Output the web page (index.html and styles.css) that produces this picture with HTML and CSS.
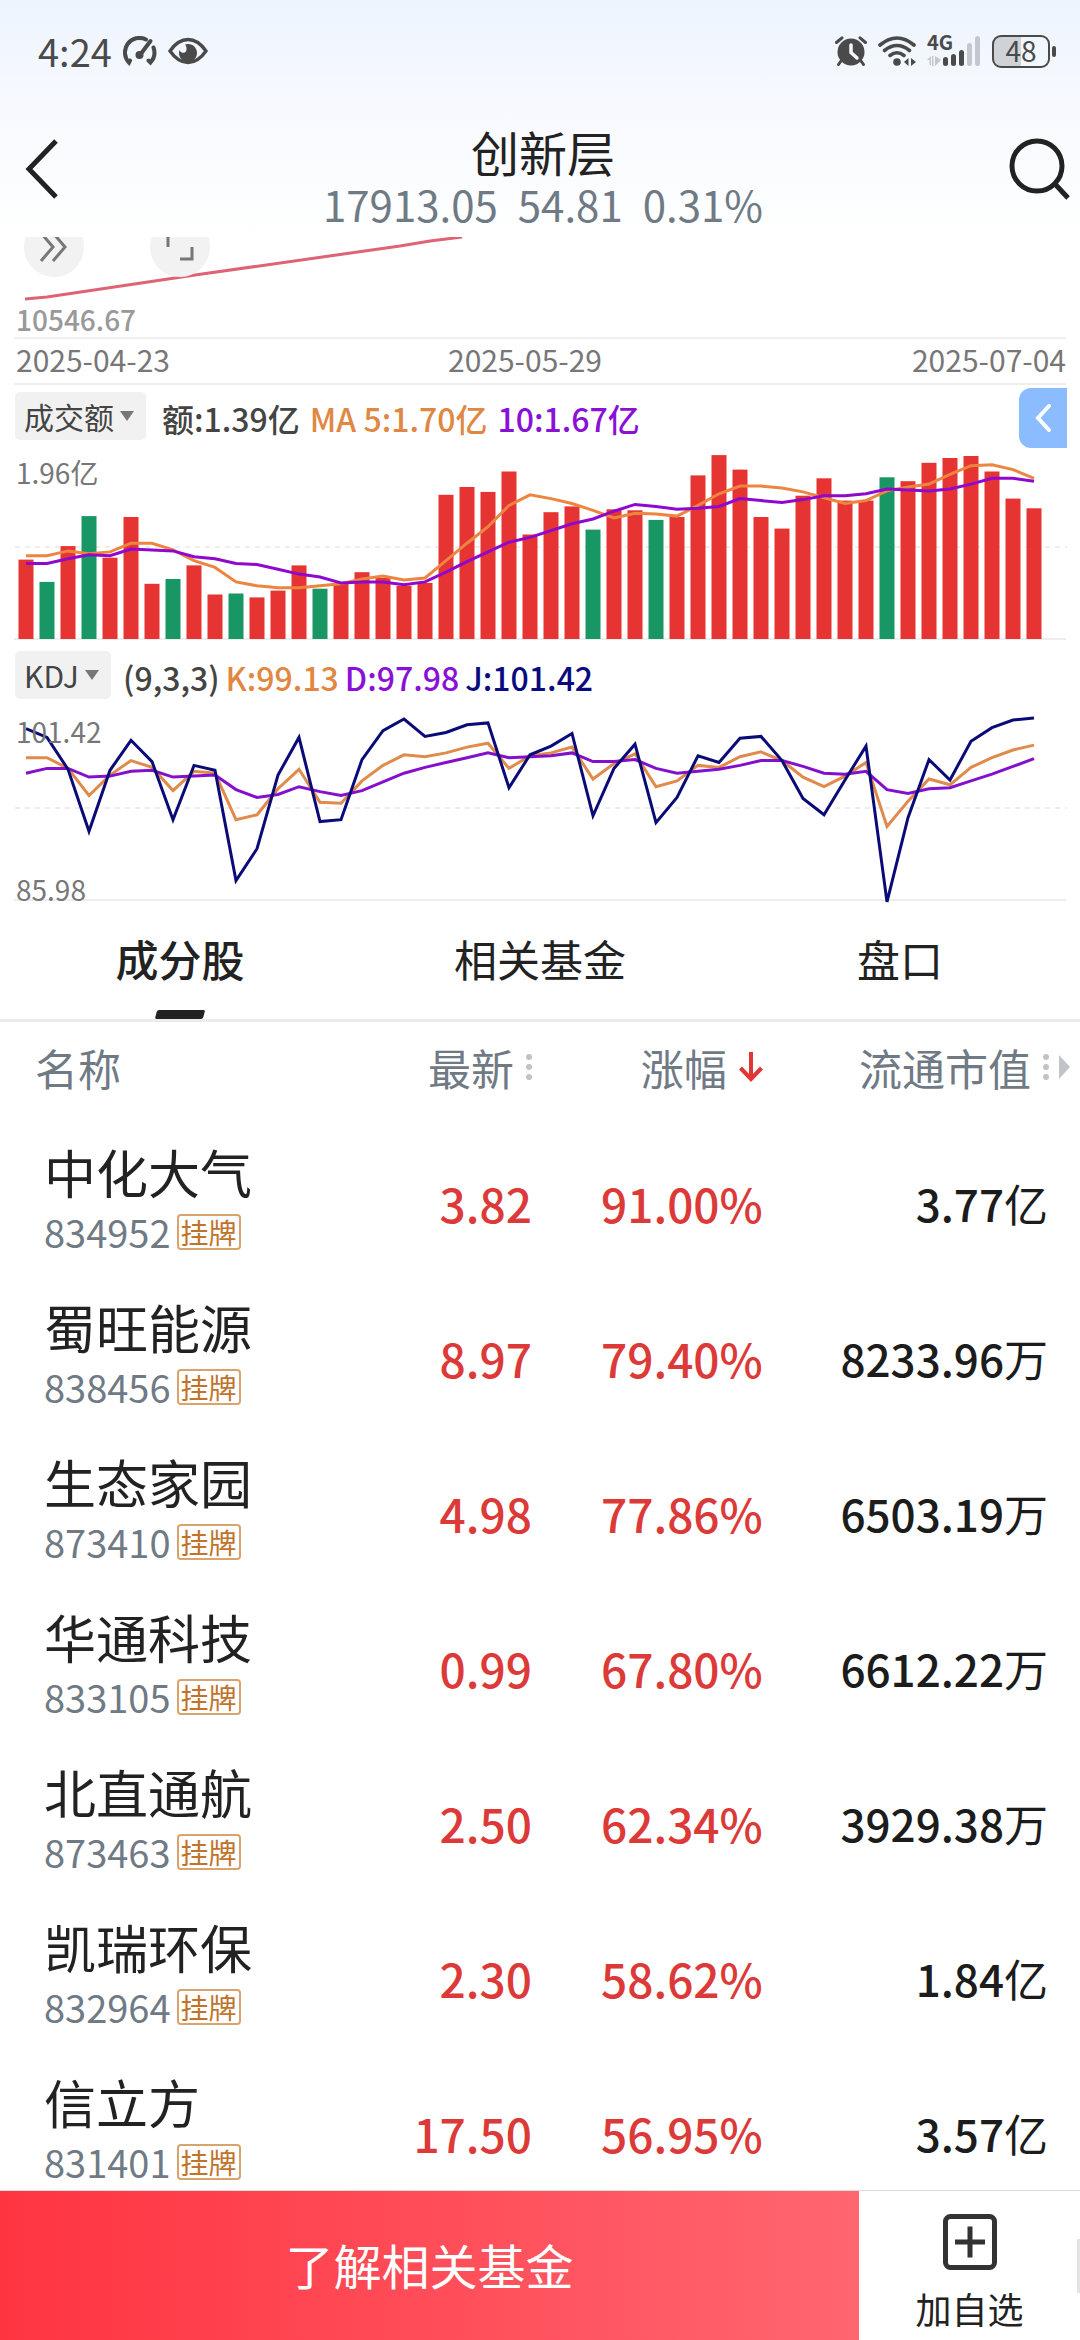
FILE: index.html
```html
<!DOCTYPE html>
<html lang="zh-CN">

<head>
    <meta charset="UTF-8">
    <meta name="viewport" content="width=device-width, initial-scale=1">
    <title>创新层</title>
    <link rel="stylesheet" href="styles.css">
</head>

<body>
    <!-- 顶部 -->
    <header class="topo">
        <div class="status">
            <div class="status-left">
                <span class="time">4:24</span>
                <svg width="34" height="30" viewBox="0 0 34 30" fill="none" stroke="#4a4a4a" stroke-width="4" stroke-linecap="round">
                    <path d="M23 3.500A14.500 14.500 0 0 0 6 26.500l1-2" />
                    <path d="M30.500 11.500a15 15 0 0 1-3 15l-2-2" />
                    <path d="M27.500 5L17 19" />
                    <circle cx="16.500" cy="19" r="2" fill="#4a4a4a" />
                </svg>
                <svg width="40" height="28" viewBox="0 0 40 28">
                    <path d="M2 14Q10 2.500 20 2.500T38 14Q30 25.500 20 25.500T2 14z" fill="none" stroke="#4a4a4a" stroke-width="3.400" />
                    <path d="M17 7.500a9 9 0 1 1-5.500 5.500 3.800 3.800 0 0 0 6.500 1.500q1.500-4-1-7z" fill="#4a4a4a" />
                </svg>
            </div>
            <div class="status-right">
                <svg width="32" height="30" viewBox="0 0 32 30">
                    <circle cx="16" cy="16" r="13.500" fill="#4a4a4a" />
                    <path d="M1.500 6.500L7 1.800M30.500 6.500L25 1.800M6 25l-2.500 3.500M26 25l2.500 3.500" stroke="#4a4a4a" stroke-width="3" stroke-linecap="round" />
                    <path d="M16 9v7.500l6 5.500" fill="none" stroke="#f3f7fd" stroke-width="3.500" stroke-linecap="round" />
                </svg>
                <svg width="38" height="30" viewBox="0 0 38 30" fill="none" stroke="#4a4a4a" stroke-width="3.600" stroke-linecap="round">
                    <path d="M2 9q17-14 34 0M6.500 14.500q12.500-10 25 0M12 19.500q7-5.500 14 0" />
                    <circle cx="19" cy="26" r="3.800" fill="#4a4a4a" stroke="none" />
                    <path d="M30.500 22v8l-4.500-4zM33 22v8l5-4z" fill="#4a4a4a" stroke="none" />
                </svg>
                <div class="signal">
                    <span class="rede">4G</span>
                    <svg width="54" height="30" viewBox="0 0 54 30" fill="#4a4a4a">
                        <path d="M0 24l4-4v9H2.500v-5zM8 20v10l6-6zM5 20h1.500v10H5z" fill="#c4c7cb" />
                        <rect x="16" y="21" width="5" height="9" rx="2.500" />
                        <rect x="24" y="18" width="5" height="12" rx="2.500" />
                        <rect x="32" y="14" width="5" height="16" rx="2.500" />
                        <rect x="40" y="7" width="5" height="23" rx="2.500" fill="#c4c7cb" />
                        <rect x="48" y="0" width="5" height="30" rx="2.500" fill="#c4c7cb" />
                    </svg>
                </div>
                <div class="battery">48</div>
            </div>
        </div>
        <div class="navbar">
            <button class="icon-btn" aria-label="返回">
                <svg width="36" height="64" viewBox="0 0 36 64" fill="none" stroke="#222" stroke-width="5">
                    <path d="M32 4L5 32l27 28" />
                </svg>
            </button>
            <div class="titulo">
                <h1>创新层</h1>
                <p class="cotacao"><span>17913.05</span><span>54.81</span><span>0.31%</span></p>
            </div>
            <button class="icon-btn" aria-label="搜索">
                <svg width="62" height="64" viewBox="0 0 62 64" fill="none" stroke="#222" stroke-width="5">
                    <circle cx="29" cy="29" r="25" />
                    <path d="M47 47l13 14" />
                </svg>
            </button>
        </div>
    </header>

    <!-- 走势图 -->
    <section class="preco">
        <svg class="grafico" viewBox="0 0 1080 100" fill="none">
            <path d="M25 62L47 60 195 38 400 9 430 4 462 0" stroke="#de6374" stroke-width="3" />
        </svg>
        <button class="bolha bolha-avancar" aria-label="展开">
            <svg width="30" height="32" viewBox="0 0 30 32" fill="none" stroke="#777" stroke-width="3">
                <path d="M2 2l12 14L2 30M14 2l12 14-12 14" />
            </svg>
        </button>
        <button class="bolha bolha-tela" aria-label="全屏">
            <svg width="30" height="30" viewBox="0 0 30 30" fill="none" stroke="#777" stroke-width="3">
                <path d="M3 15V3h12M15 27h12V15" />
            </svg>
        </button>
        <span class="preco-min">10546.67</span>
    </section>
    <div class="datas">
        <span>2025-04-23</span><span class="meio">2025-05-29</span><span>2025-07-04</span>
    </div>

    <!-- 成交额 -->
    <section class="painel">
        <div class="legenda">
            <div class="seletor">
                <select aria-label="指标一">
                    <option>成交额</option>
                    <option>成交量</option>
                </select>
            </div>
            <span>额:1.39亿</span>
            <span class="laranja">MA 5:1.70亿</span>
            <span class="roxo">10:1.67亿</span>
            <button class="recolher" aria-label="收起">
                <svg width="16" height="28" viewBox="0 0 16 28" fill="none" stroke="#fff" stroke-width="4" stroke-linecap="round">
                    <path d="M14 2L3 14l11 12" />
                </svg>
            </button>
        </div>
        <svg class="grafico" id="volume" viewBox="0 0 1080 199"></svg>
        <span class="valor-max">1.96亿</span>
    </section>

    <!-- KDJ -->
    <section class="painel">
        <div class="legenda legenda-kdj">
            <div class="seletor">
                <select aria-label="指标二">
                    <option>KDJ</option>
                    <option>RSI</option>
                </select>
            </div>
            <span>(9,3,3)</span>
            <span class="laranja">K:99.13</span>
            <span class="roxo">D:97.98</span>
            <span class="azul">J:101.42</span>
        </div>
        <svg class="grafico" id="kdj" viewBox="0 0 1080 203"></svg>
        <span class="valor-max">101.42</span>
        <span class="valor-min">85.98</span>
    </section>

    <!-- 标签 -->
    <nav class="abas">
        <button class="aba ativa">成分股</button>
        <button class="aba">相关基金</button>
        <button class="aba">盘口</button>
    </nav>

    <!-- 成分股列表 -->
    <main class="lista">
        <table>
            <thead>
                <tr>
                    <th>名称</th>
                    <th>
                        <button class="ordenar">最新
                            <svg width="6" height="28" viewBox="0 0 6 28" fill="#c0c4c9">
                                <circle cx="3" cy="4" r="3" /><circle cx="3" cy="14" r="3" /><circle cx="3" cy="24" r="3" />
                            </svg>
                        </button>
                    </th>
                    <th>
                        <button class="ordenar">涨幅
                            <svg width="24" height="30" viewBox="0 0 24 30" fill="none" stroke="#e03634" stroke-width="4">
                                <path d="M12 0v26M1.500 16L12 27l10.500-11" />
                            </svg>
                        </button>
                    </th>
                    <th>
                        <button class="ordenar">流通市值
                            <svg width="28" height="28" viewBox="0 0 28 28" fill="#c0c4c9">
                                <circle cx="3" cy="4" r="3" /><circle cx="3" cy="14" r="3" /><circle cx="3" cy="24" r="3" />
                                <path d="M16 2l11 12-11 12z" />
                            </svg>
                        </button>
                    </th>
                </tr>
            </thead>
            <tbody id="tabela-corpo"></tbody>
        </table>
    </main>

    <!-- 底部 -->
    <footer class="rodape">
        <button class="fundos">了解相关基金</button>
        <button class="favorito">
            <svg width="54" height="56" viewBox="0 0 54 56" fill="none" stroke="#333" stroke-width="5">
                <rect x="2.500" y="2.500" width="49" height="51" rx="5" />
                <path d="M12 28h30M27 12.500v31" />
            </svg>
            加自选
        </button>
    </footer>

    <script src="script.js"></script>
</body>

</html>
```

FILE: styles.css
```css
* {
    box-sizing: border-box;
}

body {
    margin: 0;
    height: 100vh;
    display: flex;
    flex-direction: column;
    overflow: hidden;
    background: #fff;
    color: #222;
    font-family: "Noto Sans CJK SC", "Noto Sans", sans-serif;
}

button {
    border: none;
    padding: 0;
    background: none;
    font: inherit;
    color: inherit;
    cursor: pointer;
}

svg {
    display: block;
    flex: none;
}

/* 顶部 */
.topo {
    background: linear-gradient(#edf4fe, #f5f8fe 35%, #fff);
    padding-bottom: 5px;
}

.status {
    display: flex;
    justify-content: space-between;
    align-items: center;
    height: 102px;
    padding: 0 24px 0 38px;
    color: #4a4a4a;
}

.status-left,
.status-right {
    display: flex;
    align-items: center;
    gap: 11px;
}

.time {
    font-size: 38px;
    line-height: 44px;
}

.signal {
    position: relative;
}

.rede {
    position: absolute;
    top: 0;
    left: 0;
    font-size: 20px;
    line-height: 12px;
    font-weight: bold;
}

.battery {
    position: relative;
    width: 58px;
    height: 33px;
    margin-right: 6px;
    border: 2px solid #4a4a4a;
    border-radius: 9px;
    background: linear-gradient(90deg, #cfd2d7 50%, transparent 50%);
    font-size: 28px;
    line-height: 26px;
    text-align: center;
}

.battery::after {
    content: "";
    position: absolute;
    right: -8px;
    top: 9px;
    width: 4px;
    height: 11px;
    border-radius: 2px;
    background: #4a4a4a;
}

.navbar {
    display: flex;
    justify-content: space-between;
    align-items: center;
    height: 130px;
    padding: 4px 10px 0 24px;
}

.icon-btn {
    width: 62px;
}

.titulo {
    padding-top: 13px;
    margin-right: 8px;
    text-align: center;
}

h1 {
    margin: 0;
    font-size: 48px;
    line-height: 56px;
    font-weight: normal;
}

.cotacao {
    display: flex;
    gap: 20px;
    margin: 0;
    font-size: 42px;
    line-height: 50px;
    color: #6f7a85;
}

/* 走势图 */
.grafico {
    width: 100%;
}

.preco {
    position: relative;
    overflow: hidden;
}

.bolha {
    position: absolute;
    top: -20px;
    width: 60px;
    height: 60px;
    border-radius: 50%;
    background: #f2f2f2;
    display: flex;
    justify-content: center;
    align-items: center;
}

.bolha-avancar {
    left: 24px;
}

.bolha-tela {
    left: 150px;
}

.preco-min {
    position: absolute;
    left: 16px;
    bottom: 2px;
    font-size: 28px;
    line-height: 32px;
    font-weight: 500;
    color: #999;
}

.datas {
    display: flex;
    justify-content: space-between;
    margin: 0 14px;
    padding: 0 0 4px 2px;
    border-top: 2px solid #eef0f0;
    border-bottom: 2px solid #eef0f0;
    font-size: 30px;
    line-height: 40px;
    color: #777;
}

.meio {
    margin-right: 32px;
}

/* 指标 */
.painel {
    position: relative;
}

.legenda {
    display: flex;
    align-items: center;
    gap: 10px;
    height: 54px;
    margin: 6px 13px 0 15px;
    font-size: 32px;
    line-height: 48px;
    font-weight: 500;
    color: #444;
}

.legenda-kdj {
    gap: 6px;
}

.seletor {
    position: relative;
    margin: 0 6px 4px 0;
}

.seletor select {
    appearance: none;
    display: block;
    height: 48px;
    padding: 0 32px 0 9px;
    border: none;
    border-radius: 5px;
    background: #f1f1f1;
    color: #444;
    font-family: inherit;
    font-size: 30px;
}

.seletor::after {
    content: "";
    position: absolute;
    right: 12px;
    top: 19px;
    border: 7px solid transparent;
    border-top: 10px solid #777;
    border-bottom: none;
    pointer-events: none;
}

.laranja {
    color: #e08743;
}

.roxo {
    color: #8a10d8;
}

.azul {
    color: #0b0b80;
}

.recolher {
    display: flex;
    justify-content: center;
    align-items: center;
    width: 48px;
    height: 60px;
    margin-left: auto;
    border-radius: 12px 0 0 12px;
    background: #8bbcff;
}

.valor-max,
.valor-min {
    position: absolute;
    left: 16px;
    font-size: 28px;
    line-height: 32px;
    color: #777;
}

.valor-max {
    top: 71px;
}

.valor-min {
    bottom: 2px;
}

/* 标签 */
.abas {
    display: flex;
    border-bottom: 3px solid #e9ebec;
}

.aba {
    position: relative;
    flex: 1;
    height: 112px;
    padding-bottom: 10px;
    font-size: 43px;
    line-height: 48px;
}

.ativa {
    font-weight: 500;
}

.ativa::after {
    content: "";
    position: absolute;
    left: 50%;
    bottom: 0;
    width: 48px;
    height: 9px;
    margin-left: -24px;
    border-radius: 2px;
    background: #222;
    transform: skewX(-15deg);
}

/* 列表 */
.lista {
    flex: 1;
    min-height: 0;
    overflow: hidden;
}

table {
    width: 100%;
    table-layout: fixed;
    border-collapse: collapse;
}

th,
td {
    padding: 0;
    text-align: right;
}

th {
    height: 107px;
    padding-bottom: 17px;
    font-size: 43px;
    line-height: 48px;
    font-weight: normal;
    color: #6f7a85;
}

th:nth-child(1) {
    width: 28%;
    padding-left: 35px;
    text-align: left;
}

th:nth-child(2) {
    width: 22%;
}

th:nth-child(3) {
    width: 21%;
}

th:nth-child(4) {
    padding-right: 9px;
}

.ordenar {
    display: inline-flex;
    align-items: center;
    gap: 12px;
    white-space: nowrap;
}

td {
    height: 155px;
    padding-bottom: 8px;
    font-size: 46px;
    line-height: 52px;
    font-weight: 500;
    color: #dc3a38;
}

td:nth-child(1) {
    padding: 0 0 16px 44px;
    text-align: left;
}

th:nth-child(2),
td:nth-child(2) {
    padding-right: 8px;
}

th:nth-child(3),
td:nth-child(3) {
    padding-right: 4px;
}

td:nth-child(4) {
    padding-right: 32px;
    font-size: 44px;
    color: #1c1c1c;
}

.unidade {
    font-weight: normal;
}

.nome {
    font-size: 52px;
    line-height: 66px;
    font-weight: normal;
    color: #222;
    white-space: nowrap;
}

.codigo {
    display: flex;
    align-items: center;
    gap: 6px;
    font-size: 38px;
    line-height: 54px;
    font-weight: normal;
    color: #6f7a85;
}

.selo {
    padding: 0 2px;
    border: 2px solid #d8a36c;
    border-radius: 4px;
    font-size: 28px;
    line-height: 32px;
    color: #bf732b;
}

/* 底部 */
.rodape {
    display: flex;
    height: 150px;
    border-top: 1px solid #ddd;
    background: #fff;
}

.fundos {
    flex: 859 1 0;
    padding-bottom: 4px;
    background: linear-gradient(90deg, #ff3441, #ff6670);
    color: #fff;
    font-size: 48px;
    line-height: 56px;
}

.favorito {
    flex: 221 1 0;
    display: flex;
    flex-direction: column;
    align-items: center;
    gap: 16px;
    padding-top: 23px;
    background: linear-gradient(#e3e3e3, #e3e3e3) no-repeat right 48px / 3px 54px;
    font-size: 36px;
    line-height: 44px;
}
```

FILE: script.js
```js
const acoes = [
    ["中化大气", "834952", "3.82", "91.00%", "3.77", "亿"],
    ["蜀旺能源", "838456", "8.97", "79.40%", "8233.96", "万"],
    ["生态家园", "873410", "4.98", "77.86%", "6503.19", "万"],
    ["华通科技", "833105", "0.99", "67.80%", "6612.22", "万"],
    ["北直通航", "873463", "2.50", "62.34%", "3929.38", "万"],
    ["凯瑞环保", "832964", "2.30", "58.62%", "1.84", "亿"],
    ["信立方", "831401", "17.50", "56.95%", "3.57", "亿"]
];

const volume = [82, 59, 96, 127, 84, 126, 57, 62, 76, 46, 47, 43, 50, 76, 52, 57, 69, 63, 55, 58, 149, 157, 152, 173, 108, 131, 137, 113, 134, 133, 123, 126, 169, 190, 175, 126, 114, 148, 166, 143, 143, 167, 163, 182, 187, 189, 173, 145, 135];
const quedas = [1, 3, 7, 10, 14, 27, 30, 41];
const ma5 = [86, 86, 91, 88, 90, 99, 99, 92, 81, 74, 59, 55, 53, 53, 55, 57, 62, 65, 61, 63, 81, 99, 116, 138, 149, 145, 140, 133, 125, 130, 129, 127, 138, 150, 158, 158, 156, 152, 146, 140, 143, 153, 157, 160, 170, 179, 180, 175, 166];
const ma10 = [78, 78, 83, 87, 86, 93, 92, 91, 85, 83, 78, 77, 72, 67, 64, 58, 59, 59, 56, 59, 69, 80, 90, 100, 105, 112, 119, 124, 132, 139, 137, 134, 135, 137, 145, 143, 141, 144, 148, 148, 150, 155, 154, 153, 155, 160, 166, 166, 163];

const k = [147, 147, 136, 108, 129, 144, 137, 113, 133, 131, 83, 88, 115, 135, 101, 100, 123, 139, 150, 148, 152, 158, 162, 136, 149, 152, 158, 125, 141, 151, 117, 123, 139, 137, 148, 153, 144, 127, 117, 128, 142, 76, 102, 125, 119, 137, 147, 155, 160];
const d = [131, 136, 136, 127, 128, 133, 134, 127, 128, 129, 114, 106, 109, 117, 112, 108, 113, 122, 131, 137, 142, 147, 152, 147, 148, 149, 152, 143, 143, 145, 136, 131, 133, 135, 139, 144, 144, 138, 131, 130, 133, 114, 110, 115, 116, 123, 130, 138, 146];
const j = [177, 168, 135, 71, 134, 165, 143, 83, 139, 134, 20, 53, 129, 168, 81, 83, 145, 175, 187, 169, 173, 181, 183, 116, 150, 159, 172, 87, 136, 161, 80, 106, 149, 142, 167, 169, 144, 105, 88, 124, 159, -2, 85, 145, 124, 164, 178, 186, 188];

const escala = 0.968;
const posX = i => 26 + i * 21;

function linha(dados, base, cor) {
    const pontos = dados.map((v, i) => `${posX(i)},${(base - v * escala).toFixed(1)}`).join(' ');
    return `<polyline points="${pontos}" fill="none" stroke="${cor}" stroke-width="3"/>`;
}

function grade(meio, base) {
    return `<path d="M15 ${meio}H1067" stroke="#eee" stroke-width="2" stroke-dasharray="5 5"/>
        <path d="M14 ${base}H1066" stroke="#eee" stroke-width="2"/>`;
}

// 成交额柱状图
const barras = volume.map((v, i) => {
    const h = v * escala;
    const cor = quedas.includes(i) ? '#189664' : '#e63432';
    return `<rect x="${posX(i) - 7.5}" y="${(194 - h).toFixed(1)}" width="15" height="${h.toFixed(1)}" fill="${cor}"/>`;
}).join('');
document.getElementById('volume').innerHTML =
    grade(102, 194) + barras + linha(ma5, 194, '#ed8540') + linha(ma10, 194, '#9008cc');

// KDJ
document.getElementById('kdj').innerHTML =
    grade(104, 196) + linha(k, 196, '#e08a4c') + linha(d, 196, '#8410cc') + linha(j, 196, '#0b0b78');

// 列表
const tabela = document.getElementById('tabela-corpo');
acoes.forEach(([nome, codigo, preco, variacao, valor, unidade]) => {
    const novaLinha = document.createElement('tr');
    novaLinha.innerHTML = `
        <td>
            <div class="nome">${nome}</div>
            <div class="codigo">${codigo}<span class="selo">挂牌</span></div>
        </td>
        <td>${preco}</td>
        <td>${variacao}</td>
        <td>${valor}<span class="unidade">${unidade}</span></td>`;
    tabela.appendChild(novaLinha);
});
```
